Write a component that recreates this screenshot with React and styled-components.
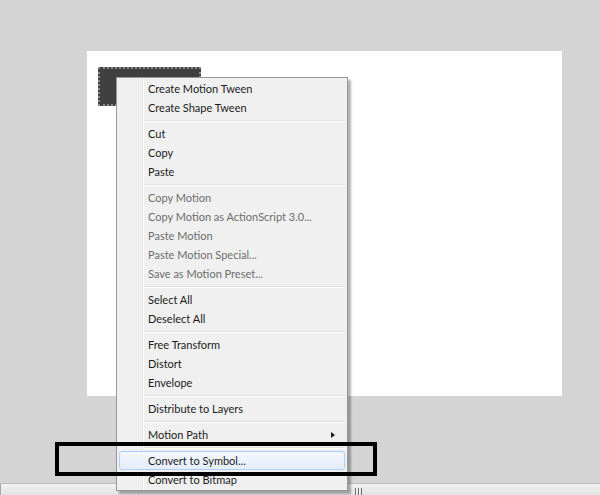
import React from "react";
import styled, { createGlobalStyle } from "styled-components";

const Global = createGlobalStyle`
  html, body { margin: 0; padding: 0; }
  body { background: #d4d4d4; font-family: "Lato", "Open Sans", sans-serif; }
  #root { width: 600px; height: 495px; }
`;

const Screen = styled.div`
  position: relative;
  width: 600px;
  height: 495px;
  overflow: hidden;
  display: flex;
  flex-direction: column;
  background: #d4d4d4;
`;

const Workspace = styled.div`
  flex: 1;
  padding: 51px 0 0 87px;
`;

const Stage = styled.div`
  width: 475px;
  height: 345px;
  box-sizing: border-box;
  padding: 16px 0 0 11px;
  background: #ffffff;
`;

const Shape = styled.div`
  width: 103px;
  height: 39px;
  box-sizing: border-box;
  border: 2px dotted #8a8a8a;
  background-color: #262626;
  background-image: radial-gradient(circle, #5e5e5e 0.6px, transparent 0.8px);
  background-size: 2px 2px;
`;

const ScrollBar = styled.div`
  height: 11px;
  border-top: 1px solid #bdbdbd;
  border-left: 1px solid #a8a8a8;
  background: linear-gradient(#f2f2f2, #e2e2e2);
  display: flex;
  align-items: flex-end;
`;

const Grip = styled.div`
  margin-left: 354px;
  width: 7px;
  height: 7px;
  background: repeating-linear-gradient(90deg, #6e6e6e 0 1px, #f4f4f4 1px 2px, transparent 2px 3px);
`;

const Menu = styled.div`
  position: absolute;
  left: 116px;
  top: 77px;
  width: 230px;
  padding: 1px 0;
  border: 1px solid #979797;
  background: #f0f0f0;
  box-shadow: 3px 3px 2px rgba(0, 0, 0, 0.3);
  font-family: "Lato", "Open Sans", sans-serif;
  font-size: 11px;
  display: flex;
  flex-direction: column;
  &::before {
    content: "";
    position: absolute;
    left: 25px;
    top: 0;
    bottom: 0;
    width: 1px;
    background: #e2e3e3;
    box-shadow: 1px 0 0 #ffffff;
  }
`;

const Item = styled.div`
  position: relative;
  height: 19px;
  margin: 0 2px;
  padding-left: 28px;
  display: flex;
  align-items: center;
  color: ${(p) => (p.$disabled ? "#6d6d6d" : "#1b1b1b")};
  border: 1px solid ${(p) => (p.$active ? "#aecff7" : "transparent")};
  border-radius: 3px;
  box-sizing: border-box;
  background: ${(p) => (p.$active ? "linear-gradient(#f3f7fd, #e6eefb)" : "transparent")};
  white-space: nowrap;
  z-index: 1;
`;

const Arrow = styled.span`
  position: absolute;
  right: 9px;
  top: 6px;
  width: 0;
  height: 0;
  border-top: 3.5px solid transparent;
  border-bottom: 3.5px solid transparent;
  border-left: 4px solid #1b1b1b;
`;

const Separator = styled.div`
  height: 7px;
  margin: 0 2px 0 27px;
  display: flex;
  align-items: center;
  &::after {
    content: "";
    flex: 1;
    height: 1px;
    background: #e0e0e0;
    box-shadow: 0 1px 0 #ffffff;
  }
`;

const Callout = styled.div`
  position: absolute;
  left: 55px;
  top: 442px;
  width: 322px;
  height: 34px;
  box-sizing: border-box;
  border: 4px solid #000000;
  pointer-events: none;
`;

const groups = [
  [{ t: "Create Motion Tween" }, { t: "Create Shape Tween" }],
  [{ t: "Cut" }, { t: "Copy" }, { t: "Paste" }],
  [
    { t: "Copy Motion", d: true },
    { t: "Copy Motion as ActionScript 3.0...", d: true },
    { t: "Paste Motion", d: true },
    { t: "Paste Motion Special...", d: true },
    { t: "Save as Motion Preset...", d: true },
  ],
  [{ t: "Select All" }, { t: "Deselect All" }],
  [{ t: "Free Transform" }, { t: "Distort" }, { t: "Envelope" }],
  [{ t: "Distribute to Layers" }],
  [{ t: "Motion Path", sub: true }],
  [{ t: "Convert to Symbol...", a: true }, { t: "Convert to Bitmap" }],
];

export default function App() {
  return (
    <>
      <Global />
      <Screen>
        <Workspace>
          <Stage>
            <Shape />
          </Stage>
        </Workspace>
        <ScrollBar>
          <Grip />
        </ScrollBar>
        <Menu>
          {groups.map((g, gi) => (
            <React.Fragment key={gi}>
              {gi > 0 && <Separator />}
              {g.map((it) => (
                <Item key={it.t} $disabled={it.d} $active={it.a}>
                  {it.t}
                  {it.sub && <Arrow />}
                </Item>
              ))}
            </React.Fragment>
          ))}
        </Menu>
        <Callout />
      </Screen>
    </>
  );
}
